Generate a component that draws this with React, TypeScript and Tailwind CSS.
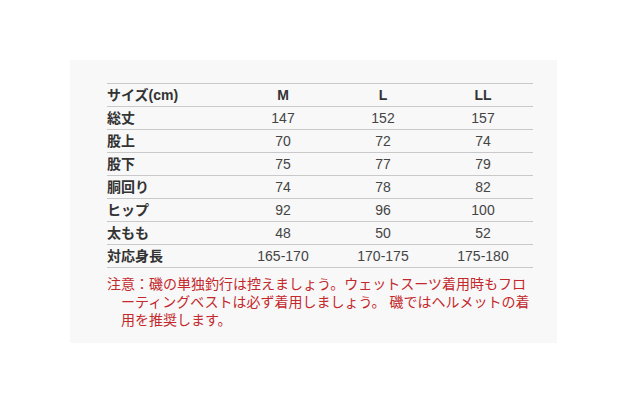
import React from 'react';

const sizes = ['M', 'L', 'LL'];

const rows: { label: string; values: string[] }[] = [
  { label: '総丈', values: ['147', '152', '157'] },
  { label: '股上', values: ['70', '72', '74'] },
  { label: '股下', values: ['75', '77', '79'] },
  { label: '胴回り', values: ['74', '78', '82'] },
  { label: 'ヒップ', values: ['92', '96', '100'] },
  { label: '太もも', values: ['48', '50', '52'] },
  { label: '対応身長', values: ['165-170', '170-175', '175-180'] },
];

export default function App() {
  return (
    <div className="w-[625px] h-[403px] bg-white pt-[60px] pl-[70px] font-['Liberation_Sans','Noto_Sans_CJK_JP',sans-serif] text-[14px]">
      <div className="w-[487px] h-[283px] bg-[#f8f8f8] pt-[23px] pl-[37px] pr-[24px]">
        {/* Size table */}
        <div className="w-[426px] border-t border-[#c9c9c9]">
          <div className="flex h-[23px] items-center border-b border-[#c9c9c9] font-bold text-[#333]">
            <div className="w-[126px]">サイズ(cm)</div>
            {sizes.map((s) => (
              <div key={s} className="w-[100px] text-center">{s}</div>
            ))}
          </div>
          {rows.map((row) => (
            <div key={row.label} className="flex h-[23px] items-center border-b border-[#c9c9c9]">
              <div className="w-[126px] font-bold text-[#333]">{row.label}</div>
              {row.values.map((v, i) => (
                <div key={i} className="w-[100px] text-center text-[#444]">{v}</div>
              ))}
            </div>
          ))}
        </div>

        {/* Note */}
        <p className="mt-[7px] pl-[14px] indent-[-14px] leading-[18px] text-[#c3282c] whitespace-nowrap">
          注意：磯の単独釣行は控えましょう。ウェットスーツ着用時もフロ
          <br />
          ーティングベストは必ず着用しましょう。 磯ではヘルメットの着
          <br />
          用を推奨します。
        </p>
      </div>
    </div>
  );
}
